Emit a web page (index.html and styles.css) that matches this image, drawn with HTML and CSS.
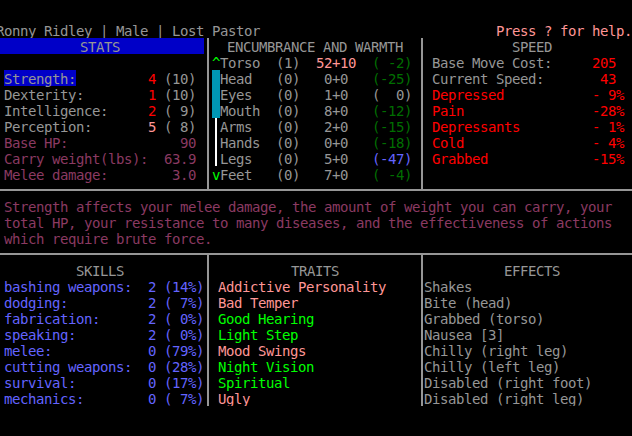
FILE: index.html
```html
<!DOCTYPE html>
<html lang="en">
  <head>
    <meta charset="UTF-8">
    <title>Character Sheet</title>
    <link rel="stylesheet" href="styles.css">
  </head>
  <body>
    <div class="screen">
      <div class="titlebar">
        <span class="row">Ronny Ridley | Male | Lost Pastor</span>
        <span class="row c-lred">Press ? for help.</span>
      </div>

      <div class="top">
        <section class="panel stats">
          <div class="head head-stats">STATS</div>
          <div class="row"></div>
          <div class="row txt"><span class="sel">Strength:</span>         <span class="c-red">4</span> (10)</div>
          <div class="row txt">Dexterity:        <span class="c-red">1</span> (10)</div>
          <div class="row txt">Intelligence:     <span class="c-red">2</span> ( 9)</div>
          <div class="row txt">Perception:       <span class="c-lred">5</span> ( 8)</div>
          <div class="row txt c-mag">Base HP:              90</div>
          <div class="row txt c-mag">Carry weight(lbs):  63.9</div>
          <div class="row txt c-mag">Melee damage:        3.0</div>
        </section>

        <div class="vsep"></div>

        <section class="panel enc">
          <div class="head">ENCUMBRANCE AND WARMTH</div>
          <div class="enc-body">
            <div class="scroll">
              <div class="row arrow">^</div>
              <div class="thumb"></div>
              <div class="track"></div>
              <div class="row arrow">v</div>
            </div>
            <div class="enc-rows">
              <div class="row">Torso  (1)  <span class="c-lred">52+10</span>  <span class="c-green">( -2)</span></div>
              <div class="row">Head   (0)   0+0   <span class="c-green">(-25)</span></div>
              <div class="row">Eyes   (0)   1+0   (  0)</div>
              <div class="row">Mouth  (0)   8+0   <span class="c-green">(-12)</span></div>
              <div class="row">Arms   (0)   2+0   <span class="c-green">(-15)</span></div>
              <div class="row">Hands  (0)   0+0   <span class="c-green">(-18)</span></div>
              <div class="row">Legs   (0)   5+0   <span class="c-lblue">(-47)</span></div>
              <div class="row">Feet   (0)   7+0   <span class="c-green">( -4)</span></div>
            </div>
          </div>
        </section>

        <div class="vsep"></div>

        <section class="panel speed">
          <div class="head">SPEED</div>
          <div class="row">Base Move Cost:     <span class="c-red">205</span></div>
          <div class="row">Current Speed:       <span class="c-red">43</span></div>
          <div class="row c-red">Depressed           - 9%</div>
          <div class="row c-red">Pain                -28%</div>
          <div class="row c-red">Depressants         - 1%</div>
          <div class="row c-red">Cold                - 4%</div>
          <div class="row c-red">Grabbed             -15%</div>
        </section>
      </div>

      <div class="desc c-mag">
        <div class="row">Strength affects your melee damage, the amount of weight you can carry, your</div>
        <div class="row">total HP, your resistance to many diseases, and the effectiveness of actions</div>
        <div class="row">which require brute force.</div>
      </div>

      <div class="bottom">
        <section class="panel skills c-lblue">
          <div class="head c-gray">SKILLS</div>
          <div class="row txt">bashing weapons:  2 (14%)</div>
          <div class="row txt">dodging:          2 ( 7%)</div>
          <div class="row txt">fabrication:      2 ( 0%)</div>
          <div class="row txt">speaking:         2 ( 0%)</div>
          <div class="row txt">melee:            0 (79%)</div>
          <div class="row txt">cutting weapons:  0 (28%)</div>
          <div class="row txt">survival:         0 (17%)</div>
          <div class="row txt">mechanics:        0 ( 7%)</div>
        </section>

        <div class="vsep"></div>

        <section class="panel traits">
          <div class="head">TRAITS</div>
          <div class="row c-lred">Addictive Personality</div>
          <div class="row c-lred">Bad Temper</div>
          <div class="row c-lgreen">Good Hearing</div>
          <div class="row c-lgreen">Light Step</div>
          <div class="row c-lred">Mood Swings</div>
          <div class="row c-lgreen">Night Vision</div>
          <div class="row c-lgreen">Spiritual</div>
          <div class="row c-lred">Ugly</div>
        </section>

        <div class="vsep"></div>

        <section class="panel effects">
          <div class="head">EFFECTS</div>
          <div class="row">Shakes</div>
          <div class="row">Bite (head)</div>
          <div class="row">Grabbed (torso)</div>
          <div class="row">Nausea [3]</div>
          <div class="row">Chilly (right leg)</div>
          <div class="row">Chilly (left leg)</div>
          <div class="row">Disabled (right foot)</div>
          <div class="row">Disabled (right leg)</div>
        </section>
      </div>
    </div>
  </body>
</html>
```

FILE: styles.css
```css
body {
  margin: 0;
  background: #000;
  overflow: hidden;
  font-family: "DejaVu Sans Mono", monospace;
  font-size: 14px;
  letter-spacing: -0.43px;
  line-height: 16px;
  color: #969696;
}
.screen {
  width: 636px;
  margin-left: -4px;
  padding-top: 22px;
}
/* one terminal line: 16px cell, text sits a pixel low like the console font */
.row, .head {
  display: block;
  height: 16px;
  line-height: 18px;
  white-space: pre;
}
.txt {
  padding-left: 8px;
}
.titlebar {
  display: flex;
  justify-content: space-between;
}
.head {
  text-align: center;
}
.head-stats {
  background: #0000c8;
}
.sel {
  display: inline-block;
  vertical-align: top;
  height: 16px;
  background: #0000c8;
}

/* panels + separators */
.top {
  display: flex;
  border-bottom: 2px solid #969696;
}
.top .panel {
  padding-bottom: 7px;
}
.vsep {
  width: 8px;
  flex-shrink: 0;
  background: linear-gradient(to right, transparent 3px, #969696 3px, #969696 5px, transparent 5px);
}
.stats, .skills {
  width: 208px;
}
.enc, .traits {
  width: 206px;
}
.speed {
  flex: 1;
  padding-left: 6px;
}

/* encumbrance list with its scrollbar */
.enc-body {
  display: flex;
}
.scroll {
  width: 8px;
  display: flex;
  flex-direction: column;
}
.arrow {
  color: #00ff00;
  text-align: center;
}
.thumb {
  height: 48px;
  background: #0096b4;
}
.track {
  height: 48px;
  background: linear-gradient(to right, transparent 3px, #fff 3px, #fff 5px, transparent 5px);
}

.desc {
  margin-top: 7px;
  padding-left: 8px;
}
.bottom {
  display: flex;
  margin-top: 7px;
  border-top: 2px solid #969696;
}
.bottom .panel {
  padding-top: 7px;
}
.traits {
  padding-left: 6px;
  box-sizing: border-box;
  width: 206px;
}
.traits .head {
  margin-left: -6px;
}
.effects {
  flex: 1;
  margin-left: -2px;
}
.effects .head {
  padding-left: 8px;
}

/* terminal palette */
.c-gray { color: #969696; }
.c-red { color: #ff0000; }
.c-lred { color: #ff9696; }
.c-green { color: #006e00; }
.c-lgreen { color: #00ff00; }
.c-lblue { color: #6464ff; }
.c-mag { color: #8b3a62; }
```
